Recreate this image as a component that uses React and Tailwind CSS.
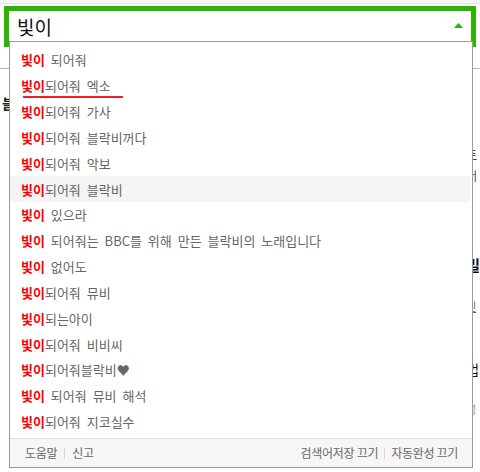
import React from "react";

const rows = [
  [" 되어줘"],
  ["되어줘 엑소", "underline"],
  ["되어줘 가사"],
  ["되어줘 블락비꺼다"],
  ["되어줘 악보"],
  ["되어줘 블락비", "hl"],
  [" 있으라"],
  [" 되어줘는 BBC를 위해 만든 블락비의 노래입니다"],
  [" 없어도"],
  ["되어줘 뮤비"],
  ["되는아이"],
  ["되어줘 비비씨"],
  ["되어줘블락비♥"],
  [" 되어줘 뮤비 해석"],
  ["되어줘 지코실수"],
];

export default function App() {
  return (
    <div className="relative w-[480px] h-[472px] overflow-hidden bg-white font-['Noto_Sans_CJK_KR','Noto_Sans',sans-serif]">
      {/* page background */}
      <div className="h-[4px] bg-[#f6f6f6] border-b border-[#e6e6e6]" />
      <div className="ml-[4px] mt-[2px] w-[472px] h-[41px] border-[5px] border-[#2db400] flex items-center pl-[8px] pr-[8px]">
        <span className="text-[19px] leading-none text-[#111] flex-1">빛이</span>
        <svg width="9" height="5" viewBox="0 0 9 5" className="mb-[2px]">
          <polygon points="4.5,0 9,5 0,5" fill="#2db400" />
        </svg>
      </div>
      <div className="h-[22px] border-b border-[#b5b5b5]" />
      <div className="flex">
        <div className="w-[473px] pl-[2px] pt-[21px]">
          <span className="text-[14px] font-bold text-[#222] leading-none">블</span>
        </div>
        <div className="flex-1 flex flex-col text-[#333] whitespace-nowrap">
          <span className="mt-[80px] text-[12px] leading-[12px] text-[#222]">토</span>
          <span className="mt-[9px] text-[12px] leading-[12px] text-[#555]">더</span>
          <span className="mt-[75px] text-[15px] font-bold leading-[15px] text-[#111]">빌</span>
          <span className="mt-[29px] text-[11px] leading-[11px] text-[#666] underline">신</span>
          <span className="mt-[50px] text-[14px] leading-[14px] text-[#111]">법</span>
          <span className="mt-[16px] text-[10px] leading-[6px] text-[#666]">..</span>
          <span className="mt-[6px] text-[11px] leading-[11px] text-[#999]">성</span>
        </div>
      </div>

      {/* autocomplete dropdown */}
      <div className="absolute left-[9px] top-[41px] w-[464px] h-[427px] border border-[#9a9a9a] bg-white flex flex-col">
        <div className="pt-[5px] pr-[2px] flex-1">
          {rows.map(([rest, flag], i) => (
            <div
              key={i}
              className={`relative h-[25.83px] flex items-center pl-[11px] text-[13px] leading-none whitespace-pre [word-spacing:3px] ${flag === "hl" ? "bg-[#f4f4f4]" : ""}`}
            >
              <span className="font-bold text-[#f00]">빛이</span>
              <span className="text-[#666]">{rest}</span>
              {flag === "underline" && (
                <span className="absolute left-[13px] bottom-[1px] w-[100px] h-[2px] bg-[#f02020]" />
              )}
            </div>
          ))}
        </div>
        <div className="h-[29px] border-t border-[#e2e2e2] bg-[#f6f6f6] flex items-center justify-between pl-[15px] pr-[14px] text-[12px] tracking-[-0.3px] text-[#666] leading-none">
          <div className="flex items-center">
            <span>도움말</span>
            <span className="mx-[7px] w-px h-[11px] bg-[#d5d5d5]" />
            <span>신고</span>
          </div>
          <div className="flex items-center">
            <span>검색어저장 끄기</span>
            <span className="mx-[6px] w-px h-[11px] bg-[#d5d5d5]" />
            <span>자동완성 끄기</span>
          </div>
        </div>
      </div>
    </div>
  );
}
